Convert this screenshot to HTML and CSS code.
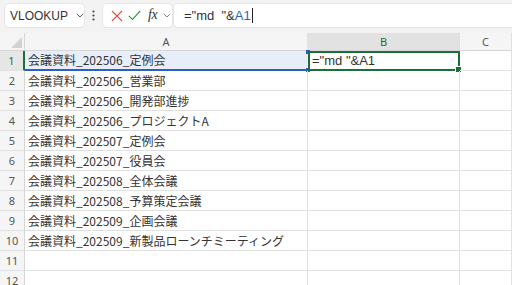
FILE: index.html
```html
<!DOCTYPE html>
<html lang="ja">
<head>
<meta charset="utf-8">
<link rel="stylesheet" href="styles.css">
</head>
<body>
<div class="app">
  <div class="toolbar">
    <div class="namebox">
      <span class="name">VLOOKUP</span>
      <svg class="chev" width="8" height="5" viewBox="0 0 8 5"><path d="M0.8 0.8 L4 4 L7.2 0.8" fill="none" stroke="#555" stroke-width="1"/></svg>
    </div>
    <div class="dots">
      <svg width="3" height="11" viewBox="0 0 3 11"><circle cx="1.5" cy="1.5" r="1.1" fill="#444"/><circle cx="1.5" cy="5.5" r="1.1" fill="#444"/><circle cx="1.5" cy="9.5" r="1.1" fill="#444"/></svg>
    </div>
    <div class="fxbox">
      <svg class="ic-x" width="12" height="12" viewBox="0 0 12 12"><path d="M1 1 L11 11 M11 1 L1 11" fill="none" stroke="#d9534f" stroke-width="1.2"/></svg>
      <svg class="ic-ok" width="13" height="11" viewBox="0 0 13 11"><path d="M0.8 5.8 L4.5 9.5 L12.2 1" fill="none" stroke="#3c9a48" stroke-width="1.2"/></svg>
      <span class="fx">fx</span>
      <svg class="chev2" width="8" height="5" viewBox="0 0 8 5"><path d="M0.8 0.8 L4 4 L7.2 0.8" fill="none" stroke="#888" stroke-width="1"/></svg>
    </div>
    <div class="formula"><span class="ftext">="md  "&amp;</span><span class="ref">A1</span><span class="caret"></span></div>
  </div>
  <div class="sheet">
    <div class="corner"><span class="tri"></span></div>
    <div class="colhead">A</div>
    <div class="colhead active">B</div>
    <div class="colhead">C</div>

    <div class="rowhead active">1</div>
    <div class="cell refcell">会議資料_202506_定例会<span class="dot dot-t"></span><span class="dot dot-b"></span></div>
    <div class="cell selcell">="md "&amp;A1<span class="handle"></span></div>
    <div class="cell"></div>

    <div class="rowhead">2</div><div class="cell">会議資料_202506_営業部</div><div class="cell"></div><div class="cell"></div>
    <div class="rowhead">3</div><div class="cell">会議資料_202506_開発部進捗</div><div class="cell"></div><div class="cell"></div>
    <div class="rowhead">4</div><div class="cell">会議資料_202506_プロジェクトA</div><div class="cell"></div><div class="cell"></div>
    <div class="rowhead">5</div><div class="cell">会議資料_202507_定例会</div><div class="cell"></div><div class="cell"></div>
    <div class="rowhead">6</div><div class="cell">会議資料_202507_役員会</div><div class="cell"></div><div class="cell"></div>
    <div class="rowhead">7</div><div class="cell">会議資料_202508_全体会議</div><div class="cell"></div><div class="cell"></div>
    <div class="rowhead">8</div><div class="cell">会議資料_202508_予算策定会議</div><div class="cell"></div><div class="cell"></div>
    <div class="rowhead">9</div><div class="cell">会議資料_202509_企画会議</div><div class="cell"></div><div class="cell"></div>
    <div class="rowhead">10</div><div class="cell">会議資料_202509_新製品ローンチミーティング</div><div class="cell"></div><div class="cell"></div>
    <div class="rowhead">11</div><div class="cell"></div><div class="cell"></div><div class="cell"></div>
    <div class="rowhead">12</div><div class="cell"></div><div class="cell"></div><div class="cell"></div>
  </div>
</div>
</body>
</html>
```
FILE: styles.css
```css
html, body {
  margin: 0;
  padding: 0;
  background: #ffffff;
}
.app {
  width: 512px;
  height: 285px;
  overflow: hidden;
  font-family: "Noto Sans CJK JP", "Noto Sans", sans-serif;
}
.toolbar {
  height: 33px;
  box-sizing: border-box;
  background: #f3f3f3;
  display: flex;
  align-items: flex-start;
  padding: 4px 0 0 5px;
}
.namebox, .fxbox, .formula {
  height: 23px;
  box-sizing: border-box;
  background: #ffffff;
  border-radius: 4px;
  box-shadow: 0 0 0 1px #e6e6e6, 0 1px 0 0 #d8d8d8;
  display: flex;
  align-items: center;
}
.namebox {
  width: 79px;
  padding-left: 5px;
}
.name {
  font-family: "Liberation Sans", Arial, sans-serif;
  font-size: 12px;
  color: #333333;
}
.chev {
  margin-left: 8px;
}
.dots {
  width: 19px;
  height: 23px;
  display: flex;
  align-items: center;
  justify-content: center;
}
.fxbox {
  width: 69px;
  padding-left: 8px;
}
.ic-x { margin-right: 5px; }
.ic-ok { margin-right: 7px; }
.fx {
  font-family: "Liberation Serif", "DejaVu Serif", serif;
  font-style: italic;
  font-size: 14px;
  color: #333333;
  letter-spacing: -0.5px;
  margin-top: -2px;
}
.chev2 { margin-left: 6px; }
.formula {
  flex: 1;
  margin-left: 2px;
  border-radius: 4px 0 0 4px;
  padding-left: 10px;
  font-family: "Liberation Sans", Arial, sans-serif;
  font-size: 13px;
  color: #333333;
}
.ftext { white-space: pre; }
.ref { color: #2b5fc7; }
.caret {
  display: inline-block;
  width: 1px;
  height: 15px;
  background: #222222;
  margin-left: 1px;
}
.sheet {
  display: grid;
  grid-template-columns: 25px 283px 152px 52px;
  grid-template-rows: 18px;
  grid-auto-rows: 20px;
}
.corner {
  background: #f5f5f5;
  border-right: 1px solid #d6d6d6;
  border-bottom: 1px solid #d6d6d6;
  box-sizing: border-box;
  position: relative;
}
.tri {
  position: absolute;
  right: 2px;
  bottom: 2px;
  width: 0;
  height: 0;
  border-left: 11px solid transparent;
  border-bottom: 11px solid #d2d2d2;
}
.colhead {
  background: #f5f5f5;
  border-right: 1px solid #e1e1e1;
  border-bottom: 1px solid #d6d6d6;
  box-sizing: border-box;
  font-family: "Noto Sans", sans-serif;
  font-size: 11px;
  color: #555555;
  text-align: center;
  line-height: 17px;
}
.colhead.active {
  background: #e2e2e2;
  color: #1e6e3a;
}
.rowhead {
  background: #f5f5f5;
  border-right: 1px solid #d6d6d6;
  border-bottom: 1px solid #e1e1e1;
  box-sizing: border-box;
  font-family: "Noto Sans", sans-serif;
  font-size: 11px;
  color: #555555;
  text-align: center;
  line-height: 19px;
}
.rowhead.active {
  background: #e6e6e6;
  color: #1e6e3a;
  border-right: 2px solid #1e6e3a;
}
.cell {
  border-right: 1px solid #e1e1e1;
  border-bottom: 1px solid #e1e1e1;
  box-sizing: border-box;
  font-size: 12px;
  color: #333333;
  padding-left: 3px;
  line-height: 19px;
  white-space: nowrap;
  position: relative;
}
.refcell {
  background: #e8eef9;
  border-bottom: 2px solid #2b5fc7;
  border-right: none;
  line-height: 18px;
}
.dot {
  position: absolute;
  right: -2px;
  width: 4px;
  height: 4px;
  background: #2b5fc7;
}
.dot-t { top: -1px; }
.dot-b { bottom: -3px; }
.selcell {
  border: 2px solid #1e6e3a;
  padding-left: 2px;
  line-height: 16px;
  font-family: "Liberation Sans", Arial, sans-serif;
  font-size: 13px;
}
.handle {
  position: absolute;
  right: -4px;
  bottom: -4px;
  width: 5px;
  height: 5px;
  background: #1e6e3a;
  border: 1px solid #ffffff;
}
```
